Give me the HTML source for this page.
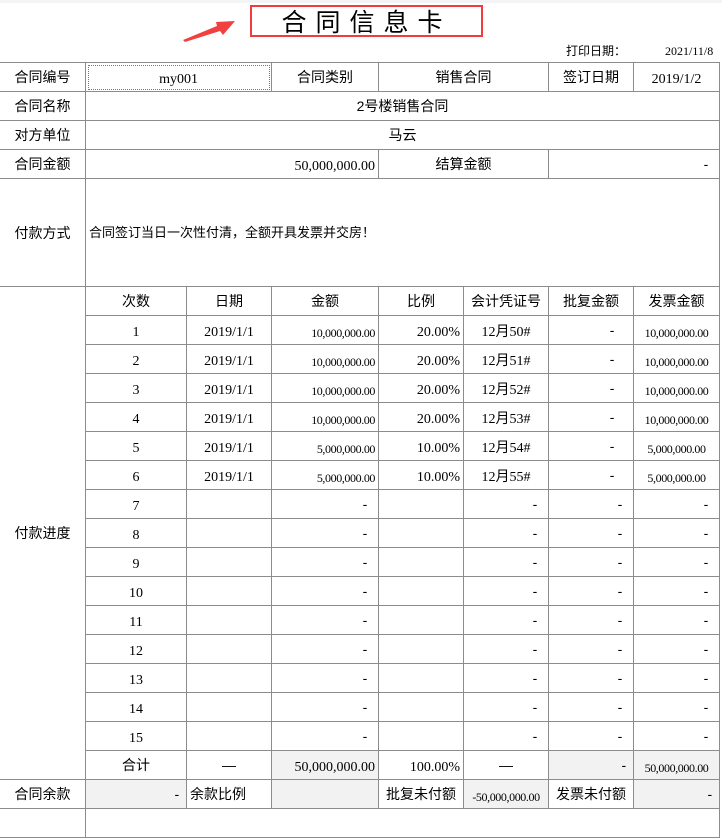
<!DOCTYPE html>
<html><head><meta charset="utf-8"><style>
body{margin:0;width:722px;height:816px;background:#fff;position:relative;overflow:hidden;font-family:"Liberation Sans","Noto Sans CJK SC",sans-serif;color:#000}
.top{position:absolute;left:0;top:0;width:722px;height:3px;background:#f3f4f6}
.title{position:absolute;left:250px;top:5px;width:229px;height:28px;border:2px solid #f03c3c;text-align:center;font-size:25px;line-height:28px;letter-spacing:9px;font-family:"Noto Sans CJK SC",sans-serif}
.pd{position:absolute;top:42px;font-size:12px}
table{position:absolute;left:-1px;top:62px;border-collapse:collapse;table-layout:fixed;width:720px}
td{border:1px solid #8c8c8c;height:28px;line-height:28px;padding:0 3px;font-size:14px;text-align:center;white-space:nowrap;overflow:hidden;vertical-align:middle}
td.n,td.s{padding-top:6px;height:22px;line-height:22px}
.n{font-family:"Liberation Serif",serif;font-size:14px}
.s{font-family:"Liberation Serif",serif;font-size:12px;letter-spacing:-0.4px}
.r{text-align:right}
.g{background:#f2f2f2}
.l{text-align:left}
</style></head><body>
<div class="top"></div>
<svg style="position:absolute;left:180px;top:16px" width="60" height="28"><polygon points="3,24 37,10 36,6 55,5 43,19 40,15 5,26" fill="#f04040"/></svg>
<div class="title">合同信息卡</div>
<div class="pd" style="left:566px">打印日期：</div>
<div class="pd" style="left:665px;font-size:12px;font-family:'Liberation Serif',serif;top:44px">2021/11/8</div>
<table>
<colgroup><col style="width:86px"><col style="width:101px"><col style="width:85px"><col style="width:107px"><col style="width:85px"><col style="width:85px"><col style="width:85px"><col style="width:86px"></colgroup>
<tr><td>合同编号</td><td colspan="2" class="n" style="outline:1px dotted #5577cc;outline-offset:-3px">my001</td><td>合同类别</td><td colspan="2">销售合同</td><td>签订日期</td><td class="n">2019/1/2</td></tr>
<tr><td>合同名称</td><td colspan="7">2号楼销售合同</td></tr>
<tr><td>对方单位</td><td colspan="7">马云</td></tr>
<tr><td>合同金额</td><td colspan="3" class="n r">50,000,000.00</td><td colspan="2">结算金额</td><td colspan="2" class="r">-&nbsp;&nbsp;</td></tr>
<tr><td style="height:107px">付款方式</td><td colspan="7" class="l" style="font-size:13px">合同签订当日一次性付清，全额开具发票并交房！</td></tr>
<tr><td rowspan="17">付款进度</td><td>次数</td><td>日期</td><td>金额</td><td>比例</td><td>会计凭证号</td><td>批复金额</td><td>发票金额</td></tr>
<tr><td class="n">1</td><td class="n">2019/1/1</td><td class="s r">10,000,000.00</td><td class="n r">20.00%</td><td class="n">12月50#</td><td class="r">-&nbsp;&nbsp;&nbsp;&nbsp;</td><td class="s">10,000,000.00</td></tr>
<tr><td class="n">2</td><td class="n">2019/1/1</td><td class="s r">10,000,000.00</td><td class="n r">20.00%</td><td class="n">12月51#</td><td class="r">-&nbsp;&nbsp;&nbsp;&nbsp;</td><td class="s">10,000,000.00</td></tr>
<tr><td class="n">3</td><td class="n">2019/1/1</td><td class="s r">10,000,000.00</td><td class="n r">20.00%</td><td class="n">12月52#</td><td class="r">-&nbsp;&nbsp;&nbsp;&nbsp;</td><td class="s">10,000,000.00</td></tr>
<tr><td class="n">4</td><td class="n">2019/1/1</td><td class="s r">10,000,000.00</td><td class="n r">20.00%</td><td class="n">12月53#</td><td class="r">-&nbsp;&nbsp;&nbsp;&nbsp;</td><td class="s">10,000,000.00</td></tr>
<tr><td class="n">5</td><td class="n">2019/1/1</td><td class="s r">5,000,000.00</td><td class="n r">10.00%</td><td class="n">12月54#</td><td class="r">-&nbsp;&nbsp;&nbsp;&nbsp;</td><td class="s">5,000,000.00</td></tr>
<tr><td class="n">6</td><td class="n">2019/1/1</td><td class="s r">5,000,000.00</td><td class="n r">10.00%</td><td class="n">12月55#</td><td class="r">-&nbsp;&nbsp;&nbsp;&nbsp;</td><td class="s">5,000,000.00</td></tr>
<tr><td class="n">7</td><td></td><td class="r">-&nbsp;&nbsp;</td><td></td><td class="r">-&nbsp;&nbsp;</td><td class="r">-&nbsp;&nbsp;</td><td class="r">-&nbsp;&nbsp;</td></tr>
<tr><td class="n">8</td><td></td><td class="r">-&nbsp;&nbsp;</td><td></td><td class="r">-&nbsp;&nbsp;</td><td class="r">-&nbsp;&nbsp;</td><td class="r">-&nbsp;&nbsp;</td></tr>
<tr><td class="n">9</td><td></td><td class="r">-&nbsp;&nbsp;</td><td></td><td class="r">-&nbsp;&nbsp;</td><td class="r">-&nbsp;&nbsp;</td><td class="r">-&nbsp;&nbsp;</td></tr>
<tr><td class="n">10</td><td></td><td class="r">-&nbsp;&nbsp;</td><td></td><td class="r">-&nbsp;&nbsp;</td><td class="r">-&nbsp;&nbsp;</td><td class="r">-&nbsp;&nbsp;</td></tr>
<tr><td class="n">11</td><td></td><td class="r">-&nbsp;&nbsp;</td><td></td><td class="r">-&nbsp;&nbsp;</td><td class="r">-&nbsp;&nbsp;</td><td class="r">-&nbsp;&nbsp;</td></tr>
<tr><td class="n">12</td><td></td><td class="r">-&nbsp;&nbsp;</td><td></td><td class="r">-&nbsp;&nbsp;</td><td class="r">-&nbsp;&nbsp;</td><td class="r">-&nbsp;&nbsp;</td></tr>
<tr><td class="n">13</td><td></td><td class="r">-&nbsp;&nbsp;</td><td></td><td class="r">-&nbsp;&nbsp;</td><td class="r">-&nbsp;&nbsp;</td><td class="r">-&nbsp;&nbsp;</td></tr>
<tr><td class="n">14</td><td></td><td class="r">-&nbsp;&nbsp;</td><td></td><td class="r">-&nbsp;&nbsp;</td><td class="r">-&nbsp;&nbsp;</td><td class="r">-&nbsp;&nbsp;</td></tr>
<tr><td class="n">15</td><td></td><td class="r">-&nbsp;&nbsp;</td><td></td><td class="r">-&nbsp;&nbsp;</td><td class="r">-&nbsp;&nbsp;</td><td class="r">-&nbsp;&nbsp;</td></tr>
<tr><td>合计</td><td>—</td><td class="n r g">50,000,000.00</td><td class="n r">100.00%</td><td>—</td><td class="r g">-&nbsp;</td><td class="s g">50,000,000.00</td></tr>
<tr><td>合同余款</td><td class="r g">-&nbsp;</td><td class="l">余款比例</td><td class="g"></td><td>批复未付额</td><td class="s g">-50,000,000.00</td><td>发票未付额</td><td class="r g">-&nbsp;</td></tr>
<tr><td></td><td colspan="7"></td></tr>
</table>
</body></html>
